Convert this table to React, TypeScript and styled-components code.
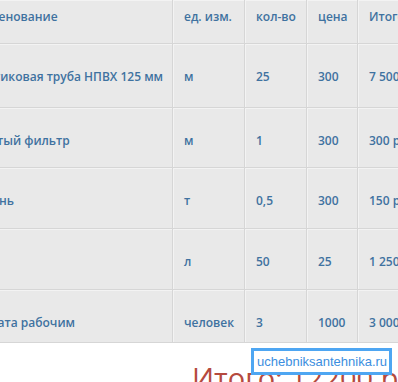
import React from 'react'
import styled, { createGlobalStyle } from 'styled-components'

const GlobalStyle = createGlobalStyle`
  html, body {
    margin: 0;
    padding: 0;
    background: #ffffff;
  }
`

const Page = styled.div`
  position: relative;
  width: 398px;
  height: 382px;
  overflow: hidden;
  background: #ffffff;
  font-family: 'Open Sans', 'Noto Sans', sans-serif;
`

const Table = styled.table`
  margin-left: -46px;
  border-collapse: separate;
  border-spacing: 0;
  table-layout: fixed;
  width: 520px;
  background: #e9e9e9;
`

const Cell = styled.td<{ w?: number }>`
  width: ${p => (p.w ? `${p.w}px` : 'auto')};
  padding: 25px 0 0 11px;
  vertical-align: top;
  text-align: left;
  font-size: 12px;
  font-weight: 600;
  line-height: 16px;
  color: #3f72a0;
  white-space: nowrap;
  overflow: hidden;
  border-right: 1px solid #d6d6d6;
  border-bottom: 1px solid #d6d6d6;
  box-shadow: inset 1px 1px 0 #f3f3f3;
`

const HeadCell = styled(Cell).attrs({ as: 'th' })`
  padding-top: 9px;
`

const HeadRow = styled.tr`
  height: 44px;
`

const Row = styled.tr<{ h: number }>`
  height: ${p => p.h}px;
`

const Total = styled.div`
  padding: 16px 0 0 192px;
  font-size: 29px;
  line-height: 38px;
  color: #b54a3e;
  white-space: nowrap;
`

const Watermark = styled.div`
  position: absolute;
  left: 251px;
  top: 348px;
  width: 132px;
  height: 21px;
  border: 3px solid #4ea6f2;
  background: #ffffff;
  color: #3b8ee0;
  font-family: 'Liberation Sans', Arial, sans-serif;
  font-size: 13px;
  line-height: 21px;
  padding-left: 3px;
  white-space: nowrap;
`

const rows = [
  { name: 'Пластиковая труба НПВХ 125 мм', unit: 'м', qty: '25', price: '300', sum: '7 500 р', h: 64 },
  { name: 'Обвитый фильтр', unit: 'м', qty: '1', price: '300', sum: '300 р', h: 60 },
  { name: 'Щебень', unit: 'т', qty: '0,5', price: '300', sum: '150 р', h: 61 },
  { name: 'Вода', unit: 'л', qty: '50', price: '25', sum: '1 250 р', h: 61 },
  { name: 'Выплата рабочим', unit: 'человек', qty: '3', price: '1000', sum: '3 000 р', h: 53 }
]

const App = () => {
  return (
    <Page>
      <GlobalStyle />
      <Table>
        <thead>
          <HeadRow>
            <HeadCell w={207}>Наименование</HeadCell>
            <HeadCell w={60}>ед. изм.</HeadCell>
            <HeadCell w={50}>кол-во</HeadCell>
            <HeadCell w={39}>цена</HeadCell>
            <HeadCell>Итого</HeadCell>
          </HeadRow>
        </thead>
        <tbody>
          {rows.map(r => (
            <Row key={r.name} h={r.h}>
              <Cell>{r.name}</Cell>
              <Cell>{r.unit}</Cell>
              <Cell>{r.qty}</Cell>
              <Cell>{r.price}</Cell>
              <Cell>{r.sum}</Cell>
            </Row>
          ))}
        </tbody>
      </Table>
      <Total>Итого: 12200 руб.</Total>
      <Watermark>uchebniksantehnika.ru</Watermark>
    </Page>
  )
}

export default App
